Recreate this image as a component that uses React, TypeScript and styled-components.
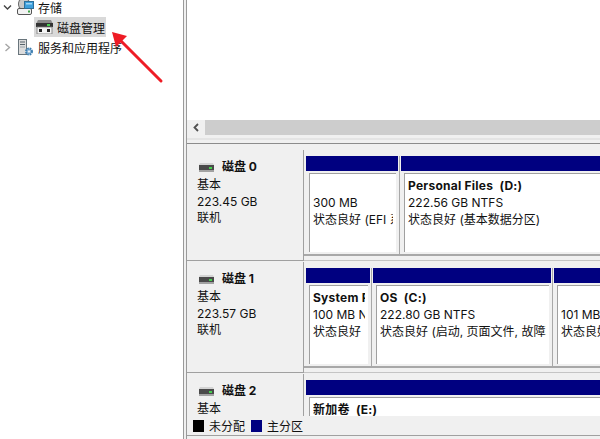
import React from 'react';
import styled, { createGlobalStyle } from 'styled-components';

const Global = createGlobalStyle`
  html, body { margin: 0; padding: 0; background: #fff; }
  body { width: 600px; height: 439px; overflow: hidden; }
`;

const FONT = `Inter, "Noto Sans CJK SC", sans-serif`;

const Page = styled.div`
  position: relative;
  width: 600px;
  height: 439px;
  display: flex;
  overflow: hidden;
  background: #fff;
  font-family: ${FONT};
  font-size: 12px;
  color: #111;
`;

const TreePane = styled.nav`
  width: 183px;
  flex: none;
  margin-top: -3px;
`;

const TreeRow = styled.div<{ $indent: number }>`
  height: 20px;
  display: flex;
  align-items: center;
  padding-left: ${p => p.$indent}px;
`;

const Twist = styled.svg`
  width: 9px;
  height: 9px;
  flex: none;
  margin-right: 5px;
`;

const NodeLabel = styled.span<{ $gap?: number }>`
  margin-left: ${p => p.$gap ?? 4}px;
  white-space: nowrap;
`;

const Selected = styled.div`
  display: flex;
  align-items: center;
  height: 20px;
  width: 70px;
  padding-left: 2px;
  background: #d9d9d9;
`;

const Splitter = styled.div`
  width: 4px;
  flex: none;
  border-left: 1px solid #9a9a9a;
  border-right: 1px solid #9a9a9a;
  background: #f0f0f0;
  box-sizing: border-box;
`;

const Right = styled.main`
  flex: 1;
  min-width: 0;
  height: 439px;
  display: flex;
  flex-direction: column;
`;

const ListArea = styled.div`
  height: 120px;
  flex: none;
`;

const Scrollbar = styled.div`
  height: 15px;
  flex: none;
  display: flex;
  background: #f0f0f0;
`;

const ScrollBtn = styled.div`
  width: 18px;
  display: flex;
  align-items: center;
  justify-content: center;
`;

const ScrollThumb = styled.div`
  flex: 1;
  background: #cdcdcd;
`;

const Divider = styled.div`
  height: 9px;
  flex: none;
  box-sizing: border-box;
  background: linear-gradient(#f0f0f0 3px, #e4e4e4 3px, #e4e4e4 5px, #f0f0f0 5px);
  border-bottom: 1px solid #8c8c8c;
`;

const DiskArea = styled.div`
  flex: 1;
  min-height: 0;
  overflow: hidden;
  padding-top: 6px;
  background: #f0f0f0;
`;

const DiskRow = styled.section`
  height: 112px;
  display: flex;
  box-sizing: border-box;
`;

const DiskInfo = styled.div`
  width: 117px;
  height: 111px;
  flex: none;
  box-sizing: border-box;
  padding: 8px 0 0 10px;
  border-bottom: 1px solid #a0a0a0;
  border-right: 1px solid #a0a0a0;
  line-height: 16.5px;
`;

const DiskTitle = styled.div`
  display: flex;
  align-items: center;
  gap: 8px;
  height: 18px;
  padding-left: 2px;
  margin-bottom: 1px;
  font-weight: 700;
`;

const Partitions = styled.div`
  flex: 1;
  min-width: 0;
  height: 111px;
  box-sizing: border-box;
  border-bottom: 1px solid #c4c4c4;
`;

const PartStrip = styled.div`
  height: 106px;
  box-sizing: border-box;
  display: flex;
  padding: 6px 0 0 2px;
  border-bottom: 2px solid #a8a8a8;
`;

const Partition = styled.div<{ $w: number }>`
  width: ${p => p.$w}px;
  flex: none;
  padding-right: 1px;
  margin-right: 1px;
  border-right: 1px solid #a8a8a8;
`;

const PartHead = styled.div`
  height: 15px;
  background: #000080;
`;

const PartBody = styled.div`
  height: 79px;
  margin: 2px 2px 0 3px;
  box-sizing: border-box;
  padding: 3px 0 0 3px;
  background: #fff;
  border-left: 1px solid #a0a0a0;
  border-top: 1px solid #a0a0a0;
`;

const PartText = styled.div`
  margin-right: 3px;
  line-height: 17px;
  overflow: hidden;
  white-space: pre;
`;

const PartLine = styled.div<{ $bold?: boolean }>`
  height: 17px;
  font-weight: ${p => (p.$bold ? 700 : 400)};
  letter-spacing: ${p => (p.$bold ? '0.25px' : 'normal')};
`;

const Legend = styled.footer`
  height: 20px;
  flex: none;
  box-sizing: border-box;
  display: flex;
  align-items: center;
  gap: 5px;
  padding-left: 6px;
  background: #f0f0f0;
  border-bottom: 1px solid #a0a0a0;
`;

const BottomEdge = styled.div`
  height: 3px;
  flex: none;
  background: #f0f0f0;
`;

const Swatch = styled.span<{ $c: string }>`
  width: 11px;
  height: 12px;
  background: ${p => p.$c};
`;

const LegendText = styled.span`
  margin-right: 1px;
`;

const Arrow = styled.svg`
  position: absolute;
  left: 105px;
  top: 25px;
  width: 65px;
  height: 65px;
  pointer-events: none;
`;

const DiskIcon = () => (
  <svg width="15" height="9" viewBox="0 0 15 9">
    <path d="M1 0h13l1 2H0z" fill="#d4d4d4" />
    <rect x="0" y="2" width="15" height="5" fill="#4a4a4a" />
    <rect x="0" y="7" width="15" height="2" fill="#a2a2a2" />
    <rect x="10" y="4" width="3" height="2" fill="#46d04e" />
  </svg>
);

const TreeDiskIcon = () => (
  <svg width="17" height="14" viewBox="0 0 17 14">
    <path d="M2 0h13l2 4H0z" fill="#8a8a8a" />
    <rect x="0" y="3" width="17" height="4" fill="#333" />
    <rect x="11" y="4" width="3" height="2" fill="#48d050" />
    <rect x="1" y="7" width="15" height="7" fill="#f4f4f4" stroke="#777" strokeWidth="0.8" />
    <rect x="3" y="9" width="3" height="3" fill="#222" />
    <rect x="11" y="9" width="3" height="3" fill="#222" />
  </svg>
);

const StorageIcon = () => (
  <svg width="17" height="17" viewBox="0 0 17 17">
    <rect x="1.5" y="0" width="11" height="10" rx="4" fill="#c8c8c8" stroke="#6e6e6e" />
    <rect x="0.5" y="9.5" width="14" height="6" rx="1.5" fill="#f2f2f2" stroke="#555" />
    <rect x="11" y="11.5" width="2" height="2" fill="#3fa648" />
    <rect x="7.5" y="2.5" width="9" height="7" fill="#3d9fdc" stroke="#2f6f99" />
    <rect x="9" y="4" width="6" height="1.5" fill="#9fd6f5" />
  </svg>
);

const ServicesIcon = () => (
  <svg width="17" height="17" viewBox="0 0 17 17">
    <rect x="1.5" y="0.5" width="8" height="15" fill="#dcdcdc" stroke="#69757c" />
    <rect x="3" y="2.5" width="5" height="1" fill="#56626a" />
    <rect x="3" y="5" width="5" height="1" fill="#56626a" />
    <rect x="3" y="7.5" width="5" height="1" fill="#9aa4aa" />
    <circle cx="12" cy="12.5" r="3" fill="#8fb9dc" stroke="#3f7fb0" strokeWidth="2" strokeDasharray="1.6 0.8" />
    <circle cx="12" cy="12.5" r="1" fill="#f4f8fb" />
  </svg>
);

type Part = { w: number; name?: string; lines: string[] };
type Disk = { name: string; size: string; parts: Part[] };

const disks: Disk[] = [
  {
    name: '磁盘 0', size: '223.45 GB',
    parts: [
      { w: 92, lines: ['', '300 MB', '状态良好 (EFI 系统分区)'] },
      { w: 240, name: 'Personal Files  (D:)', lines: ['222.56 GB NTFS', '状态良好 (基本数据分区)'] },
    ],
  },
  {
    name: '磁盘 1', size: '223.57 GB',
    parts: [
      { w: 64, name: 'System Reserved', lines: ['100 MB NTFS', '状态良好'] },
      { w: 178, name: 'OS  (C:)', lines: ['222.80 GB NTFS', '状态良好 (启动, 页面文件, 故障转储)'] },
      { w: 90, lines: ['', '101 MB', '状态良好 (恢复分区)'] },
    ],
  },
  {
    name: '磁盘 2', size: '',
    parts: [{ w: 300, name: '新加卷  (E:)', lines: [] }],
  },
];

export default function App() {
  return (
    <Page>
      <Global />
      <TreePane>
        <TreeRow $indent={3}>
          <Twist viewBox="0 0 9 9"><path d="M1 2.5l3.5 3.5L8 2.5" fill="none" stroke="#444" strokeWidth="1.4" /></Twist>
          <StorageIcon />
          <NodeLabel>存储</NodeLabel>
        </TreeRow>
        <TreeRow $indent={34}>
          <Selected>
            <TreeDiskIcon />
            <NodeLabel>磁盘管理</NodeLabel>
          </Selected>
        </TreeRow>
        <TreeRow $indent={3}>
          <Twist viewBox="0 0 9 9"><path d="M2.5 1L6.5 4.5L2.5 8" fill="none" stroke="#a6a6a6" strokeWidth="1.4" /></Twist>
          <ServicesIcon />
          <NodeLabel>服务和应用程序</NodeLabel>
        </TreeRow>
      </TreePane>
      <Splitter />
      <Right>
        <ListArea />
        <Scrollbar>
          <ScrollBtn>
            <svg width="8" height="9" viewBox="0 0 8 9"><path d="M6 1L2.5 4.5L6 8" fill="none" stroke="#505050" strokeWidth="1.8" /></svg>
          </ScrollBtn>
          <ScrollThumb />
        </Scrollbar>
        <Divider />
        <DiskArea>
          {disks.map(d => (
            <DiskRow key={d.name}>
              <DiskInfo>
                <DiskTitle><DiskIcon />{d.name}</DiskTitle>
                <div>基本</div>
                <div>{d.size}</div>
                <div>联机</div>
              </DiskInfo>
              <Partitions>
                <PartStrip>
                  {d.parts.map((p, i) => (
                    <Partition key={i} $w={p.w}>
                      <PartHead />
                      <PartBody>
                        <PartText>
                          {p.name && <PartLine $bold>{p.name}</PartLine>}
                          {p.lines.map((l, j) => <PartLine key={j}>{l}</PartLine>)}
                        </PartText>
                      </PartBody>
                    </Partition>
                  ))}
                </PartStrip>
              </Partitions>
            </DiskRow>
          ))}
        </DiskArea>
        <Legend>
          <Swatch $c="#000" />
          <LegendText>未分配</LegendText>
          <Swatch $c="#000080" />
          <LegendText>主分区</LegendText>
        </Legend>
        <BottomEdge />
      </Right>
      <Arrow viewBox="0 0 65 65">
        <path d="M56 56L12 12" stroke="#ee1c25" strokeWidth="3" strokeLinecap="round" />
        <path d="M7 7L22 11L11 22z" fill="#ee1c25" />
      </Arrow>
    </Page>
  );
}
